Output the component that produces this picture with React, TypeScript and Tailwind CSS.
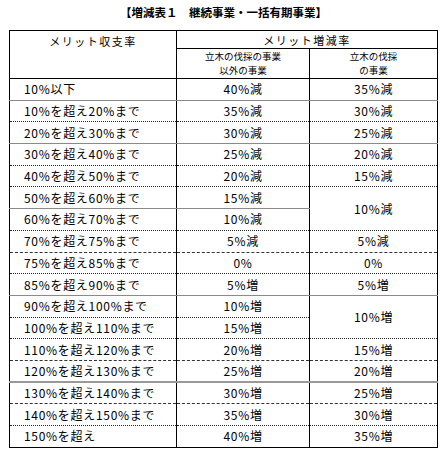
import React from "react";

type Line = "gray" | "dotted" | "dashed" | "thick" | "black";

type Row = {
  label: string;
  a: string;
  b?: string | null;
  span?: number;
  line: Line;
  lineB?: Line;
};

const rows: Row[] = [
  { label: "10%以下", a: "40%減", b: "35%減", line: "gray" },
  { label: "10%を超え20%まで", a: "35%減", b: "30%減", line: "dotted" },
  { label: "20%を超え30%まで", a: "30%減", b: "25%減", line: "gray" },
  { label: "30%を超え40%まで", a: "25%減", b: "20%減", line: "dotted" },
  { label: "40%を超え50%まで", a: "20%減", b: "15%減", line: "dotted" },
  { label: "50%を超え60%まで", a: "15%減", b: "10%減", span: 2, line: "gray", lineB: "dotted" },
  { label: "60%を超え70%まで", a: "10%減", b: null, line: "dotted" },
  { label: "70%を超え75%まで", a: "5%減", b: "5%減", line: "dashed" },
  { label: "75%を超え85%まで", a: "0%", b: "0%", line: "dotted" },
  { label: "85%を超え90%まで", a: "5%増", b: "5%増", line: "gray" },
  { label: "90%を超え100%まで", a: "10%増", b: "10%増", span: 2, line: "dotted", lineB: "dotted" },
  { label: "100%を超え110%まで", a: "15%増", b: null, line: "dotted" },
  { label: "110%を超え120%まで", a: "20%増", b: "15%増", line: "dashed" },
  { label: "120%を超え130%まで", a: "25%増", b: "20%増", line: "thick" },
  { label: "130%を超え140%まで", a: "30%増", b: "25%増", line: "dashed" },
  { label: "140%を超え150%まで", a: "35%増", b: "30%増", line: "dotted" },
  { label: "150%を超え", a: "40%増", b: "35%増", line: "black" },
];

const lineCls: Record<Line, string> = {
  gray: "border-b border-b-[#8a8a8a]",
  dotted: "border-b border-b-[#222] [border-bottom-style:dotted]",
  dashed: "border-b border-b-[#333] [border-bottom-style:dashed]",
  thick: "border-b-2 border-b-[#999]",
  black: "border-b border-b-black",
};

export default function App() {
  return (
    <div
      className="w-[447px] h-[451px] bg-white text-black"
      style={{ fontFamily: '"Noto Sans CJK JP", "Noto Sans", sans-serif' }}
    >
      <div className="h-[30px] pt-[4px] text-center text-[11.5px] font-bold leading-[16px]">
        【増減表１　継続事業・一括有期事業】
      </div>
      <table className="ml-[9px] w-[428px] border-collapse table-fixed border border-black">
        <colgroup>
          <col className="w-[167px]" />
          <col className="w-[133px]" />
          <col className="w-[128px]" />
        </colgroup>
        <thead>
          <tr className="h-[18px]">
            <th
              rowSpan={2}
              className="align-top pt-[3px] text-center text-[11px] font-normal tracking-[1.5px] leading-[14px] border-r border-r-black border-b border-b-black"
            >
              メリット収支率
            </th>
            <th
              colSpan={2}
              className="text-center text-[11px] font-normal tracking-[1.5px] leading-[14px] border-b border-b-black"
            >
              メリット増減率
            </th>
          </tr>
          <tr className="h-[30px]">
            <th className="text-center text-[9.5px] font-normal leading-[13.5px] border-r border-r-black border-b border-b-black">
              <div>立木の伐採の事業</div>
              <div>以外の事業</div>
            </th>
            <th className="text-center text-[9.5px] font-normal leading-[13.5px] border-b border-b-black">
              <div>立木の伐採</div>
              <div>の事業</div>
            </th>
          </tr>
        </thead>
        <tbody className="text-[12px] leading-[14px] tracking-[0.7px]">
          {rows.map((r, i) => (
            <tr key={i} className="h-[21.7px]">
              <td className={`pl-[14px] border-r border-r-black ${lineCls[r.line]}`}>{r.label}</td>
              <td className={`text-center border-r border-r-black ${lineCls[r.line]}`}>{r.a}</td>
              {r.b !== null && (
                <td
                  rowSpan={r.span ?? 1}
                  className={`text-center ${lineCls[r.lineB ?? r.line]}`}
                >
                  {r.b}
                </td>
              )}
            </tr>
          ))}
        </tbody>
      </table>
    </div>
  );
}
